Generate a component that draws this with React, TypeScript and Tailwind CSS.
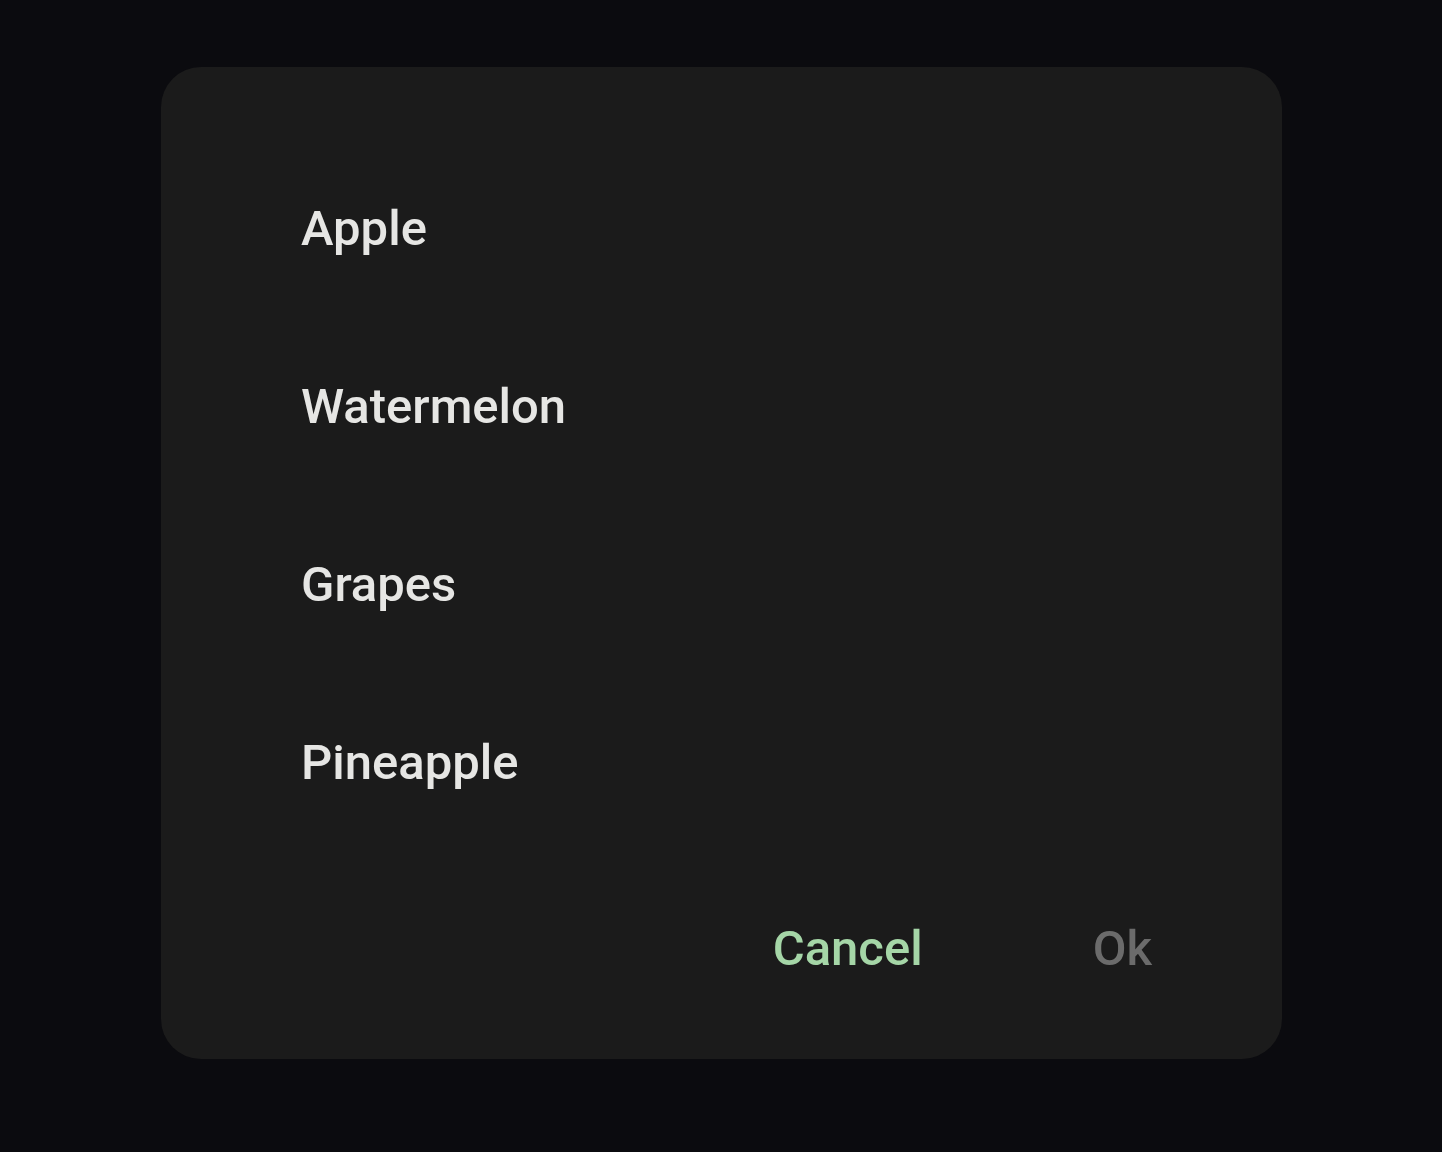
export default function App() {
  const items = ["Apple", "Watermelon", "Grapes", "Pineapple"];
  return (
    <div
      className="w-[1442px] h-[1152px] bg-[#0b0b0f] pt-[67px] pl-[161px]"
      style={{ fontFamily: "Roboto, 'Noto Sans', sans-serif" }}
    >
      <div className="w-[1121px] h-[992px] rounded-[40px] bg-[#1b1b1b] flex flex-col pt-[72px]">
        {items.map((t) => (
          <div
            key={t}
            className="h-[178px] flex items-center pl-[140px] text-[49px] font-medium text-[#e6e6e4] leading-none"
          >
            {t}
          </div>
        ))}
        <div className="flex justify-end items-center gap-[170px] pr-[128px] h-[80px] mt-[57px] text-[49px] font-medium leading-none">
          <span className="text-[#a5d6a7]">Cancel</span>
          <span className="text-[#6b6b6b] pr-[2px]">Ok</span>
        </div>
      </div>
    </div>
  );
}
